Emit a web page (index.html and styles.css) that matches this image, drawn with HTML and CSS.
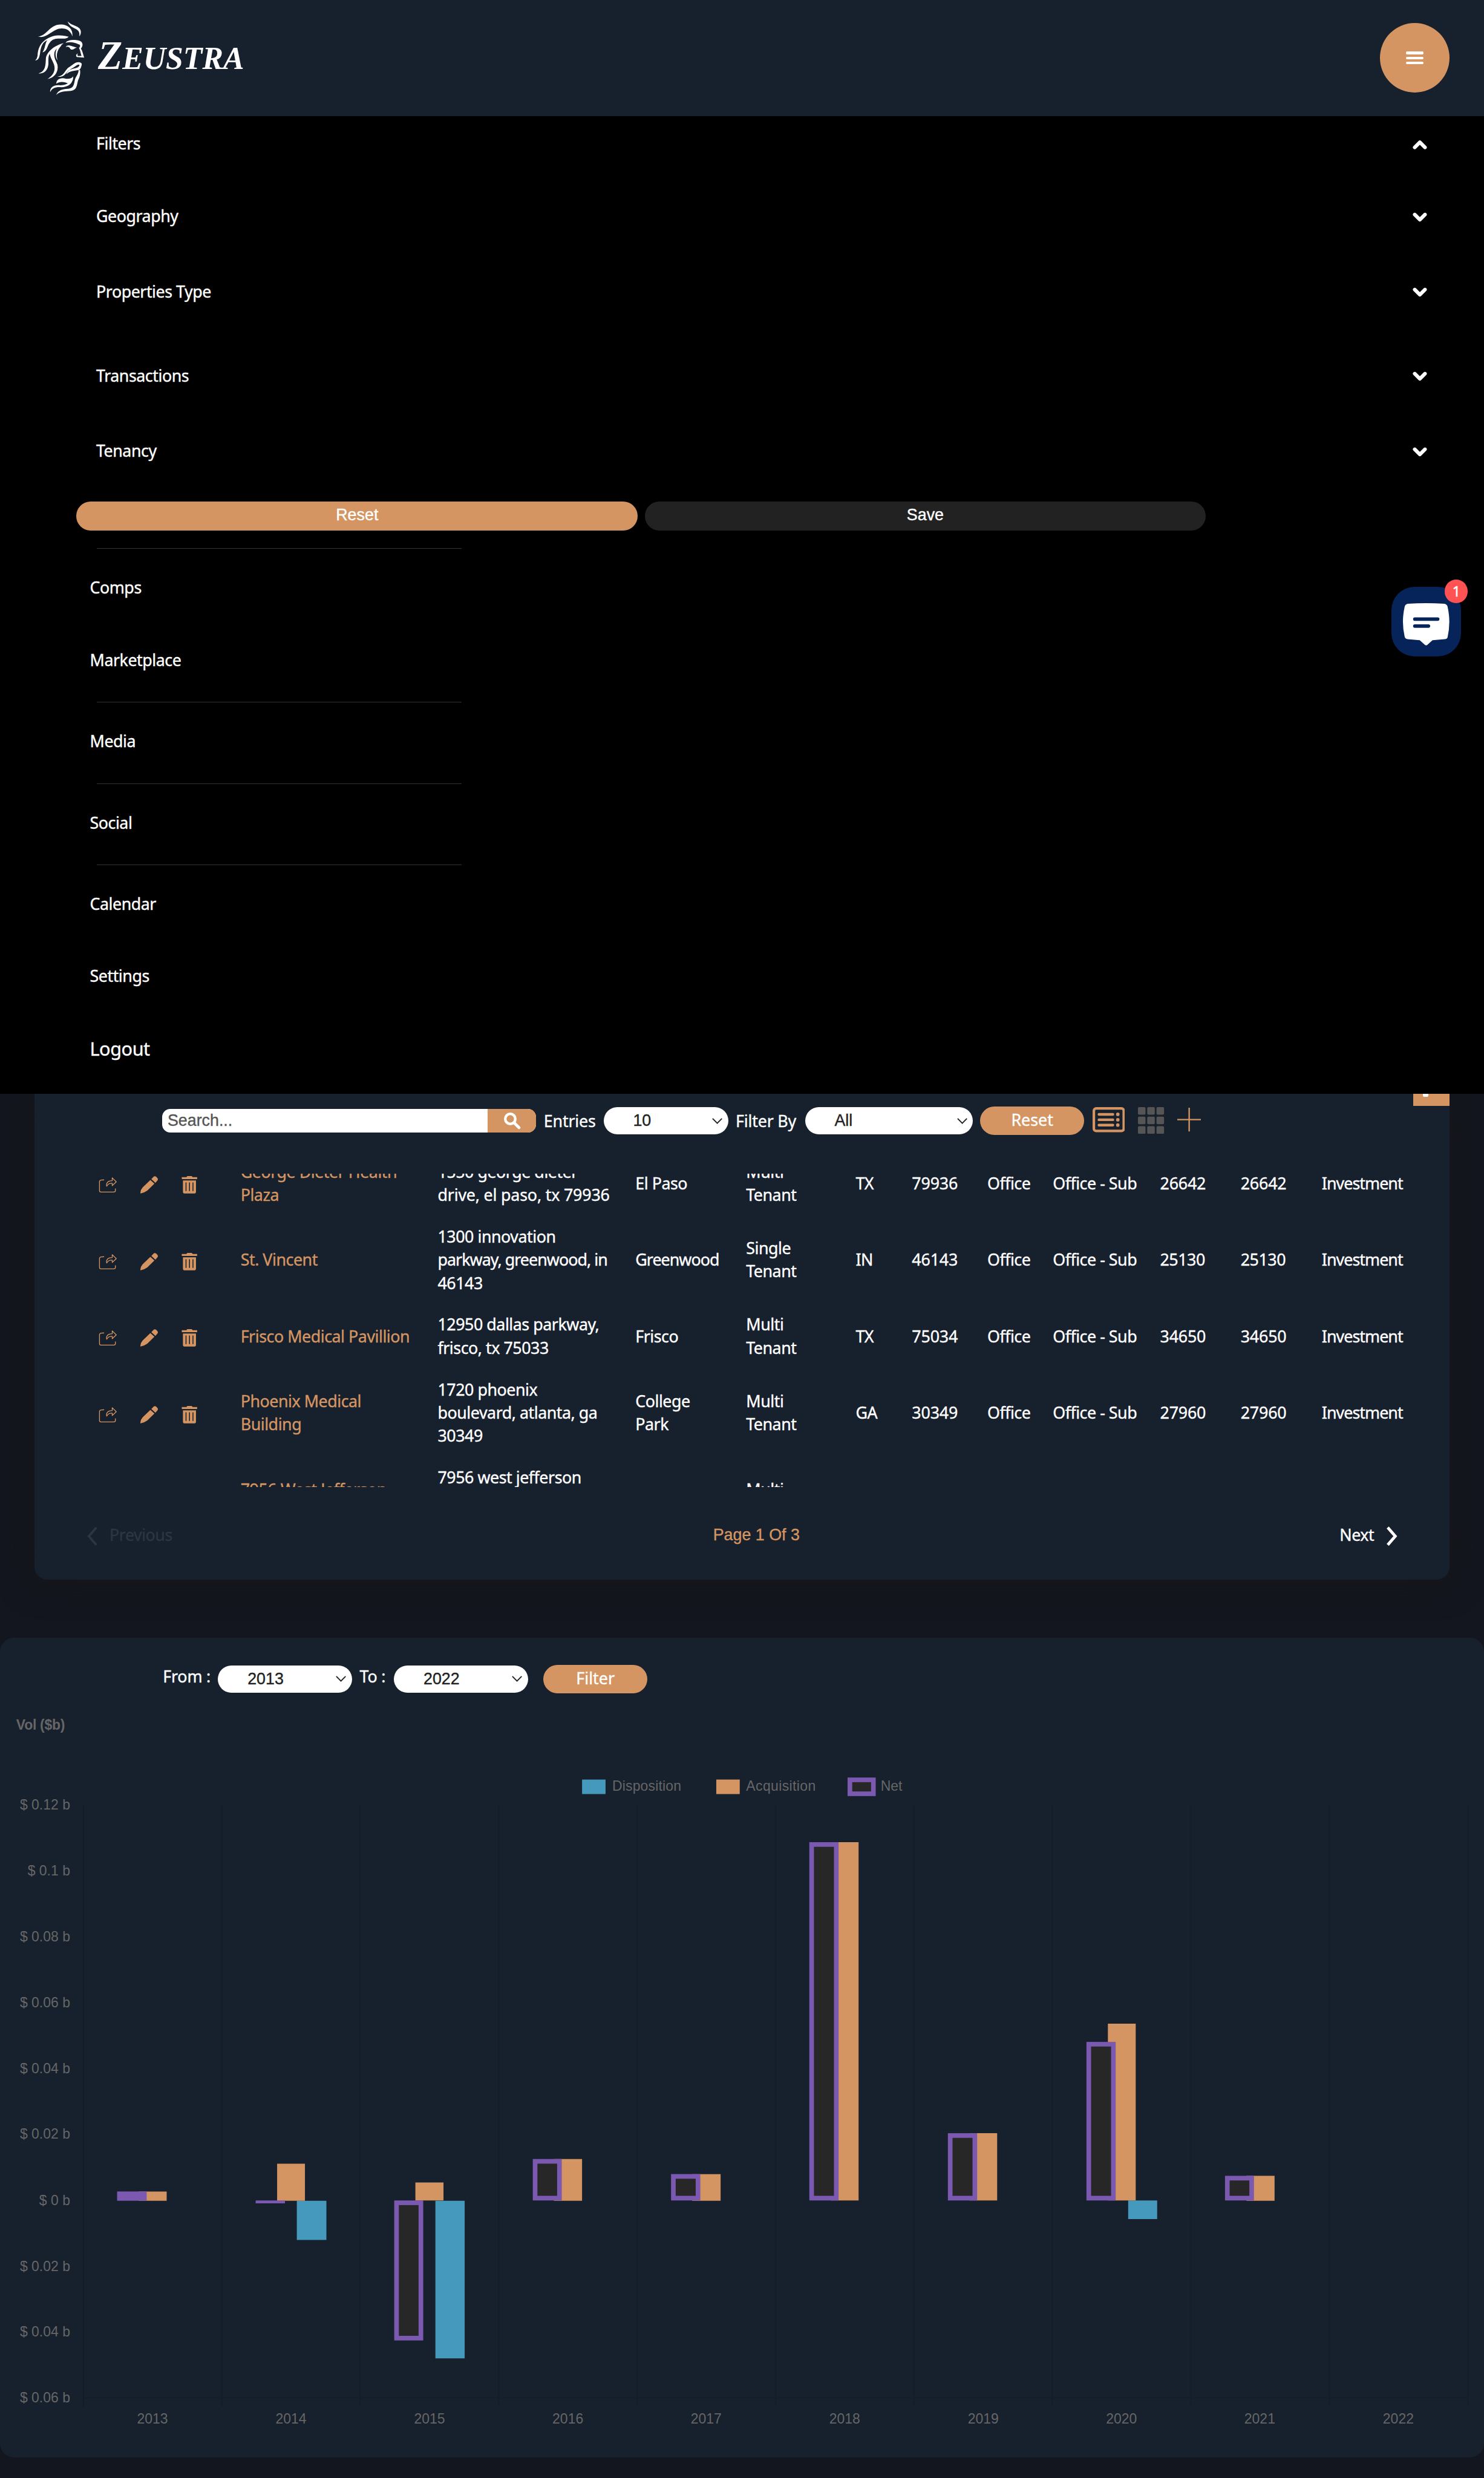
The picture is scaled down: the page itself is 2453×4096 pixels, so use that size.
FILE: index.html
```html
<!DOCTYPE html>
<html lang="en">
<head>
<meta charset="utf-8">
<title>Zeustra</title>
<link rel="stylesheet" href="styles.css">
</head>
<body>
<svg class="sprite" aria-hidden="true">
  <symbol id="chev" viewBox="0 0 24 16"><path d="M3.500 12.500L12 4L20.500 12.500" fill="none" stroke="currentColor" stroke-width="6" stroke-linecap="round" stroke-linejoin="round"/></symbol>
  <symbol id="caret" viewBox="0 0 20 12"><path d="M2 2L10 10L18 2" fill="none" stroke="currentColor" stroke-width="2"/></symbol>
  <symbol id="share" viewBox="0 0 32 30"><path d="M9.500 6.500L4 7Q1.500 7.500 1.500 10V25Q1.500 27.500 4 27.500H26Q29 27.500 29 25V21.500M14 17.500Q12 8.500 23.500 8V3L30.500 10L23.500 16.500V12.500Q17 12 14 17.500Z" fill="none" stroke="currentColor" stroke-width="1.400" stroke-linejoin="round"/></symbol>
  <symbol id="pencil" viewBox="0 0 32 32"><path d="M18.300 7.800L25.300 14.200L13 26Q7 30.300 1.300 31Q1 30.800 1.200 29Q1.500 24.500 5 20.500ZM20 6.200L23.500 2.500Q25.700 0.300 28.500 2.300L30 3.800Q32.500 6.500 30.300 9L27 12.700Z" fill="currentColor"/></symbol>
  <symbol id="trash" viewBox="0 0 28 32"><path d="M0.500 3H8.500L10 1H17.500L19.500 3H27V6.200H0.500ZM2.500 8.500H25V28Q25 31 22.500 31H5Q2.500 31 2.500 28ZM7 12V27H8.600V12ZM13 12V27H14.600V12ZM19 12V27H20.600V12Z" fill="currentColor" fill-rule="evenodd"/></symbol>
</svg>

<div class="page">
  <header class="topbar">
    <div class="brand">
      <svg class="brand-face" viewBox="180 105 258 390" fill="#fff">
        <path d="M195 187C240 185 255 125 312 125C352 125 378 150 373 187C365 160 345 146 318 146C275 146 250 190 210 190Z"/>
        <path d="M348 108C370 135 415 130 417 162Q417 178 409 186C413 160 400 152 382 144Q355 132 348 108Z"/>
        <path d="M354 189C335 182 300 178 270 186C215 205 195 240 193 285Q190 305 180 311C200 312 203 290 206 272C210 235 222 215 243 207C230 225 234 248 218 270C245 262 240 238 256 219C275 190 310 200 335 198Q348 197 354 189Z"/>
        <path d="M328 222C285 230 240 265 236 300C234 335 235 368 198 378C225 382 246 365 249 330C249 300 248 290 256 277C260 305 282 325 281 352C280 380 262 395 244 408C282 400 302 370 296 335C292 318 275 300 280 270C285 250 305 240 328 222Z"/>
        <path d="M318 232C290 260 289 290 297 312C280 290 284 258 300 238Z"/>
        <path d="M338 220C350 200 405 202 420 215C430 228 425 240 417 250C425 262 428 278 434 297L396 294C388 285 395 278 402 276Q396 284 402 288L420 288C415 270 412 255 407 247C415 240 415 228 405 228C385 217 360 214 338 220Z"/>
        <path d="M338 242Q345 229 365 236L396 245Q385 248 380 253Q365 261 358 244Q348 238 338 242Z"/>
        <path d="M295 396C330 390 330 370 350 350C375 335 385 320 405 320Q425 322 421 335Q418 352 410 360C385 365 360 365 342 382C345 365 365 355 385 352Q405 350 410 336Q407 329 395 337C370 355 355 360 345 372C330 392 320 398 295 396Z"/>
        <path d="M290 432C290 410 310 398 340 406Q368 408 377 394C378 415 370 425 358 433C340 425 310 415 290 432Z"/>
        <path d="M258 476C255 450 280 436 310 440C340 440 355 428 372 415C370 435 345 450 315 450C285 448 268 455 258 476Z"/>
        <path d="M289 490C300 465 320 460 350 458C385 455 380 430 388 405C395 390 405 380 405 362L413 362C415 385 410 400 402 415C395 445 395 465 365 469C335 472 310 470 289 490Z"/>
      </svg>
      <svg class="brand-name" viewBox="0 0 260 60"><text x="0" y="52" textLength="252" lengthAdjust="spacingAndGlyphs" font-size="70">Z<tspan font-size="55">EUSTRA</tspan></text></svg>
    </div>
    <button class="menu-btn" aria-label="Menu"><i></i><i></i><i></i></button>
  </header>

  <nav class="menu">
    <div class="filter-row f1"><span>Filters</span><svg><use href="#chev"/></svg></div>
    <div class="filter-row f2"><span>Geography</span><svg class="down"><use href="#chev"/></svg></div>
    <div class="filter-row f3"><span>Properties Type</span><svg class="down"><use href="#chev"/></svg></div>
    <div class="filter-row f4"><span>Transactions</span><svg class="down"><use href="#chev"/></svg></div>
    <div class="filter-row f5"><span>Tenancy</span><svg class="down"><use href="#chev"/></svg></div>
    <div class="menu-actions"><button class="wide accent">Reset</button><button class="wide dark">Save</button></div>
    <div class="links">
      <hr class="first">
      <a>Comps</a><a>Marketplace</a>
      <hr><a>Media</a>
      <hr><a>Social</a>
      <hr><a>Calendar</a><a>Settings</a><a class="logout">Logout</a>
    </div>
  </nav>

  <section class="card list-card">
    <div class="corner"><i></i></div>
    <div class="toolbar">
      <div class="search"><span>Search...</span><button aria-label="Search"><svg viewBox="0 0 30 30"><circle cx="12" cy="12" r="8.700" fill="none" stroke="#fff" stroke-width="4.500"/><path d="M18.500 18.500L27 27" stroke="#fff" stroke-width="5" stroke-linecap="round"/></svg></button></div>
      <label class="l1">Entries</label>
      <div class="select s1"><span>10</span><svg><use href="#caret"/></svg></div>
      <label class="l2">Filter By</label>
      <div class="select s2"><span>All</span><svg><use href="#caret"/></svg></div>
      <button class="pill reset">Reset</button>
      <svg class="ic-list" viewBox="0 0 56 44"><rect x="2.200" y="2.200" width="51.600" height="39" rx="4" fill="none" stroke="#d49562" stroke-width="4.400"/><path d="M11 12.500H35M11 21.800H35M11 31H35" stroke="#d49562" stroke-width="4.600" stroke-linecap="round"/><g fill="#d49562"><circle cx="43.500" cy="12.500" r="3"/><circle cx="43.500" cy="21.800" r="3"/><circle cx="43.500" cy="31" r="3"/></g></svg>
      <svg class="ic-grid" viewBox="0 0 46 46" fill="#555"><rect width="13" height="13" rx="2"/><rect x="16" width="13" height="13" rx="2"/><rect x="32" width="13" height="13" rx="2"/><rect y="16.500" width="13" height="13" rx="2"/><rect x="16" y="16.500" width="13" height="13" rx="2"/><rect x="32" y="16.500" width="13" height="13" rx="2"/><rect y="33" width="13" height="13" rx="2"/><rect x="16" y="33" width="13" height="13" rx="2"/><rect x="32" y="33" width="13" height="13" rx="2"/></svg>
      <svg class="ic-plus" viewBox="0 0 40 40"><path d="M20 0V40M0 20H40" stroke="#d49562" stroke-width="2.400"/></svg>
    </div>

    <div class="rows">
      <div class="row"><div class="acts"><svg class="a-share"><use href="#share"/></svg><svg class="a-pen"><use href="#pencil"/></svg><svg class="a-bin"><use href="#trash"/></svg></div><b>George Dieter Health<br>Plaza</b><span>1550 george dieter<br><span class="n">drive, el paso, tx 79936</span></span><span>El Paso</span><span>Multi<br>Tenant</span><span>TX</span><span class="n">79936</span><span>Office</span><span>Office - Sub</span><span class="n">26642</span><span class="n">26642</span><span class="tight">Investment</span></div>
      <div class="row"><div class="acts"><svg class="a-share"><use href="#share"/></svg><svg class="a-pen"><use href="#pencil"/></svg><svg class="a-bin"><use href="#trash"/></svg></div><b>St. Vincent</b><span>1300 innovation<br><span class="tight">parkway, greenwood, in</span><br>46143</span><span class="tight">Greenwood</span><span>Single<br>Tenant</span><span>IN</span><span class="n">46143</span><span>Office</span><span>Office - Sub</span><span>25130</span><span>25130</span><span class="tight">Investment</span></div>
      <div class="row"><div class="acts"><svg class="a-share"><use href="#share"/></svg><svg class="a-pen"><use href="#pencil"/></svg><svg class="a-bin"><use href="#trash"/></svg></div><b>Frisco Medical Pavillion</b><span>12950 dallas parkway,<br>frisco, tx 75033</span><span>Frisco</span><span>Multi<br>Tenant</span><span>TX</span><span class="n">75034</span><span>Office</span><span>Office - Sub</span><span class="n">34650</span><span class="n">34650</span><span class="tight">Investment</span></div>
      <div class="row"><div class="acts"><svg class="a-share"><use href="#share"/></svg><svg class="a-pen"><use href="#pencil"/></svg><svg class="a-bin"><use href="#trash"/></svg></div><b>Phoenix Medical<br>Building</b><span>1720 phoenix<br>boulevard, atlanta, ga<br>30349</span><span>College<br>Park</span><span>Multi<br>Tenant</span><span>GA</span><span class="n">30349</span><span>Office</span><span>Office - Sub</span><span class="n">27960</span><span class="n">27960</span><span class="tight">Investment</span></div>
      <div class="row last"><div></div><b>7956 West Jefferson</b><span class="addr">7956 west jefferson</span><span></span><span>Multi</span></div>
    </div>

    <div class="pager">
      <div class="prev"><svg viewBox="0 0 20 34"><path d="M17 2L4 17L17 32" fill="none" stroke="currentColor" stroke-width="4"/></svg><span>Previous</span></div>
      <div class="count">Page 1 Of 3</div>
      <div class="next"><span>Next</span><svg viewBox="0 0 20 34"><path d="M3 2L16 17L3 32" fill="none" stroke="currentColor" stroke-width="5"/></svg></div>
    </div>
  </section>

  <section class="card chart-card">
    <div class="range">
      <label class="r1">From :</label>
      <div class="select y"><span>2013</span><svg><use href="#caret"/></svg></div>
      <label class="r2">To :</label>
      <div class="select y"><span>2022</span><svg><use href="#caret"/></svg></div>
      <button class="pill filter">Filter</button>
    </div>
    <svg class="chart" viewBox="0 2950 2560 1270">
      <g stroke="#151d29" stroke-width="2"><path stroke="#131a25" d="M144 3113V4151"/><path d="M382.500 3113V4151M621 3113V4151M860 3113V4151M1099 3113V4151M1338 3113V4151M1577 3113V4151M1815 3113V4151M2054 3113V4151M2293 3113V4151M2532 3113V4151M144 4136H2532"/></g>
      <g fill="#666" font-size="24">
        <text x="28" y="2983" font-weight="bold" textLength="84">Vol ($b)</text>
        <text x="1056" y="3089" textLength="119">Disposition</text><text x="1287" y="3089" textLength="120">Acquisition</text><text x="1519" y="3089">Net</text>
        <g text-anchor="end">
          <text x="121" y="3121">$ 0.12 b</text><text x="121" y="3235">$ 0.1 b</text><text x="121" y="3349">$ 0.08 b</text><text x="121" y="3462">$ 0.06 b</text><text x="121" y="3576">$ 0.04 b</text><text x="121" y="3689">$ 0.02 b</text><text x="121" y="3804">$ 0 b</text><text x="121" y="3917">$ 0.02 b</text><text x="121" y="4030">$ 0.04 b</text><text x="121" y="4144">$ 0.06 b</text>
        </g>
        <g text-anchor="middle">
          <text x="263" y="4180">2013</text><text x="502" y="4180">2014</text><text x="741" y="4180">2015</text><text x="979.500" y="4180">2016</text><text x="1218" y="4180">2017</text><text x="1457" y="4180">2018</text><text x="1696" y="4180">2019</text><text x="1934.500" y="4180">2020</text><text x="2173" y="4180">2021</text><text x="2412" y="4180">2022</text>
        </g>
      </g>
      <g fill="#4499bd"><rect x="1004" y="3069.500" width="40.500" height="25"/><path d="M512 3796h51v67.500h-51zM751 3796h50.500v272h-50.500zM1946 3795.500h50v32h-50z"/></g>
      <path fill="#d49562" d="M1235.500 3069.500h40.500v25h-40.500zM239 3780h48.500v16h-48.500zM478 3732h48v64h-48zM716.500 3764.500h48.500v31h-48.500zM955.500 3724h48.500v72h-48.500zM1194 3750h49v46h-49zM1433 3177.500h48v618h-48zM1672 3679.500h48v116h-48zM1911 3490.500h48v305h-48zM2150 3753h48.500v43h-48.500z"/>
      <g fill="#272727" stroke="#7c59b0" stroke-width="8">
        <rect x="1466" y="3070" width="40.500" height="24"/>
        <rect x="206" y="3784" width="43" height="8"/>
        <path stroke="none" fill="#7c59b0" d="M441 3795.500h50.500v5h-50.500z"/>
        <rect x="684" y="3799.500" width="42" height="233.500"/>
        <rect x="923" y="3728" width="42" height="63.500"/>
        <rect x="1161.500" y="3754" width="42.500" height="37.500"/>
        <rect x="1400" y="3181.500" width="42.500" height="610"/>
        <rect x="1639" y="3683.500" width="42.500" height="108"/>
        <rect x="1878" y="3526" width="42.500" height="265.500"/>
        <rect x="2117" y="3757" width="42" height="34.500"/>
      </g>
    </svg>
  </section>

  <div class="chat">
    <svg viewBox="0 0 80 74"><path d="M8 1Q40 -1 72 1Q76 2 77 6Q83 32 77 59Q76 62 72 62L51 64L42 72Q40 73.500 38 72L29 64L8 62Q4 62 3 58Q-3 32 3 6Q4 2 8 1Z" fill="#fff"/><path d="M20.500 27.500H60M20.500 39.500H44" stroke="#062459" stroke-width="6" stroke-linecap="round"/></svg>
    <span class="badge">1</span>
  </div>
</div>
</body>
</html>
```
FILE: styles.css
```css
* { box-sizing: border-box; }
html, body { margin: 0; background: #13161e; }
body { overflow: hidden; }
.sprite { position: absolute; width: 0; height: 0; }

.page {
  position: relative;
  zoom: 0.9583;
  width: 2560px;
  height: 4274px;
  overflow: hidden;
  color: #fff;
  background: #13161e;
  font: 28px/40px "Noto Sans", sans-serif;
  letter-spacing: -0.5px;
  -webkit-text-stroke: 0.4px;
}
button { border: 0; padding: 0; margin: 0; color: #fff; font: inherit; letter-spacing: inherit; }
svg { display: block; flex: none; }

.topbar {
  display: flex;
  justify-content: space-between;
  align-items: center;
  height: 200px;
  padding: 0 60px 0 61px;
  background: #17202d;
}
.brand { display: flex; align-items: center; gap: 22px; }
.brand-face { width: 86px; height: 130px; }
.brand-name { width: 260px; height: 60px; margin-top: -6px; overflow: visible; }
.brand-name text {
  fill: #fff;
  font-family: "Liberation Serif", serif;
  font-weight: bold;
  font-style: italic;
  letter-spacing: 0;
  -webkit-text-stroke: 0.8px #fff;
}
.menu-btn {
  display: flex;
  flex-direction: column;
  align-items: center;
  justify-content: center;
  gap: 4px;
  width: 120px;
  height: 120px;
  border-radius: 50%;
  background: #d49562;
}
.menu-btn i { width: 30px; height: 4.7px; border-radius: 2px; background: #fff; }

.menu { position: relative; z-index: 1; height: 1687px; background: #000; }
.filter-row { display: flex; align-items: center; justify-content: space-between; padding: 2px 98px 0 166px; }
.filter-row svg { width: 25px; height: 17px; margin-top: 3px; }
.filter-row svg.down { transform: scaleY(-1); }
.f1 { height: 94px; }
.f2 { height: 156px; }
.f3 { height: 104px; }
.f4 { height: 186px; }
.f5 { height: 74px; }
.menu-actions { display: flex; gap: 12px; padding: 51px 0 0 132px; }
.wide {
  width: 968px;
  height: 50px;
  border-radius: 25px;
  padding-bottom: 3px;
  font-family: "Liberation Sans", sans-serif;
  letter-spacing: 0;
}
.accent { background: #d49562; }
.dark { background: #222; }
.links { padding: 30px 0 0 155px; }
.links hr { width: 629px; height: 1px; margin: 52px 0 47px 12px; border: 0; background: #333; }
.links hr.first { margin-top: 0; margin-bottom: 48px; }
.links a { display: block; }
.links a + a { margin-top: 85px; }
.links .logout { font-size: 32px; }

.card { background: #17202d; }
.list-card {
  position: relative;
  width: 2440px;
  height: 838px;
  margin: 0 auto;
  border-radius: 0 0 22px 22px;
  box-shadow: 0 0 60px #17171a;
}
.corner { position: absolute; top: 0; right: 0; width: 62px; height: 21px; background: #d49562; }
.corner i { position: absolute; left: 16px; top: 0; width: 10px; height: 5px; border-radius: 0 0 3px 3px; background: #fff; }
.toolbar { display: flex; align-items: center; height: 92px; padding-left: 220px; }
.search {
  display: flex;
  align-items: center;
  width: 645px;
  height: 41px;
  border-radius: 14px;
  overflow: hidden;
  background: #fff;
  color: #555;
  font-family: "Liberation Sans", sans-serif;
  letter-spacing: 0;
}
.search span { flex: 1; padding-left: 9px; }
.search button { display: flex; align-items: center; justify-content: center; width: 84px; height: 41px; background: #d49562; }
.search button svg { width: 30px; height: 30px; }
label { display: block; white-space: nowrap; letter-spacing: -0.2px; }
.l1 { width: 116px; padding: 2px 0 0 13px; }
.l2 { width: 132.5px; padding: 2px 0 0 13px; }
.select {
  display: flex;
  align-items: center;
  justify-content: space-between;
  flex: none;
  height: 47px;
  padding: 0 9px 0 51px;
  border-radius: 24px;
  background: #fff;
  color: #222;
  font-family: "Liberation Sans", sans-serif;
  letter-spacing: 0;
}
.select svg { width: 20px; height: 12px; }
.s1 { width: 215px; }
.s2 { width: 290px; }
.pill { flex: none; width: 180px; height: 49px; padding-bottom: 3px; border-radius: 25px; background: #d49562; letter-spacing: 0; }
.reset { margin-left: 12px; }
.ic-list { width: 56px; height: 44px; margin: -3px 0 0 14px; }
.ic-grid { width: 46px; height: 46px; margin-left: 22px; }
.ic-plus { width: 41px; height: 41px; margin: -3px 0 0 22px; }

.rows { height: 541px; margin-top: 45px; overflow: hidden; }
.row {
  display: grid;
  grid-template-columns: 275px 340px 341px 191px 189px 97px 130px 113px 185px 139px 140px 160px;
  align-items: center;
  height: 132px;
  padding-left: 80px;
  white-space: nowrap;
}
.row:first-child { margin-top: -49px; }
.row b { font-weight: normal; color: #d49562; }
.row .n { letter-spacing: -0.2px; }
.row .tight { letter-spacing: -1px; }
.acts { display: flex; align-items: center; color: #d49562; padding-left: 30px; padding-top: 6px; }
.a-share { width: 32px; height: 30px; }
.a-pen { width: 32px; height: 32px; margin-left: 39px; }
.a-bin { width: 28px; height: 32px; margin-left: 40px; }
.row.last { align-items: start; height: 172px; padding-top: 46px; }
.last .addr { margin-top: -20px; }

.pager { display: grid; grid-template-columns: 1081px auto 1fr; align-items: center; padding: 63px 89px 0; }
.prev, .next { display: flex; align-items: center; gap: 20px; }
.prev { color: #2c3543; }
.next { justify-content: flex-end; gap: 21px; }
.pager svg { width: 20px; height: 34px; margin-top: 4px; }
.count { color: #d49562; font-family: "Liberation Sans", sans-serif; letter-spacing: 0; }

.chart-card { height: 1414px; margin-top: 100px; border-radius: 24px; }
.range { display: flex; align-items: center; height: 125px; padding: 17px 0 0 281px; }
.range label { margin-bottom: 9px; }
.r1 { width: 95px; }
.r2 { width: 72px; padding-left: 13px; }
.y { width: 231.5px; }
.filter { margin-left: 26px; }
.chart { width: 2560px; height: 1270px; font-family: "Liberation Sans", sans-serif; letter-spacing: 0; -webkit-text-stroke: 0; }

.chat {
  position: absolute;
  z-index: 2;
  left: 2400px;
  top: 1012px;
  display: flex;
  justify-content: center;
  width: 120px;
  height: 120px;
  padding-top: 28px;
  border-radius: 40px;
  background: #062459;
}
.chat svg { width: 80px; height: 74px; }
.badge {
  position: absolute;
  right: -12px;
  top: -12px;
  width: 40px;
  height: 40px;
  border-radius: 50%;
  background: #ff5252;
  font-size: 25px;
  text-align: center;
}
```
